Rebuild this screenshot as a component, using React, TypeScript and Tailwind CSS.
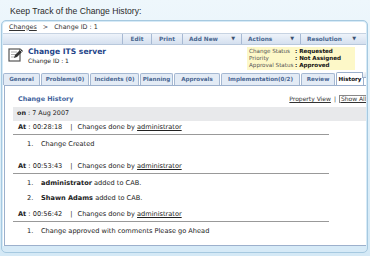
import React from "react";

const toolbar = [
  { label: "Edit", w: "w-[29px]" },
  { label: "Print", w: "w-[31px]" },
  { label: "Add New", w: "w-[59px]", menu: true },
  { label: "Actions", w: "w-[59px]", menu: true },
  { label: "Resolution", w: "w-[62px]", menu: true },
];

const tabs = [
  { label: "General", w: "w-[37px]" },
  { label: "Problems(0)", w: "w-[48px]" },
  { label: "Incidents (0)", w: "w-[49px]" },
  { label: "Planning", w: "w-[33px]" },
  { label: "Approvals", w: "w-[46px]" },
  { label: "Implementation(0/2)", w: "w-[79px]" },
  { label: "Review", w: "w-[34px]" },
  { label: "History", w: "w-[28px]", active: true },
];

const status = [
  { label: "Change Status", value: "Requested" },
  { label: "Priority", value: "Not Assigned" },
  { label: "Approval Status", value: "Approved" },
];

const entries = [
  { time: "00:28:18", pb: "pb-[8px]", items: [<>Change Created</>] },
  {
    time: "00:53:43",
    pb: "pb-[2px]",
    items: [
      <>
        <b>administrator</b> added to CAB.
      </>,
      <>
        <b>Shawn Adams</b> added to CAB.
      </>,
    ],
  },
  { time: "00:56:42", pb: "pb-[2px]", items: [<>Change approved with comments Please go Ahead</>] },
];

function EditIcon() {
  return (
    <svg width="15" height="15" viewBox="0 0 15 15">
      <rect x="1" y="2" width="11" height="12" fill="#fff" stroke="#555" strokeWidth="1.2" />
      <path d="M3 5h6M3 7.5h5M3 10h4" stroke="#999" strokeWidth="0.8" />
      <path d="M6 11l1-3 6-6 2 2-6 6z" fill="#333" />
      <path d="M12 3l2 2" stroke="#ddd" strokeWidth="0.8" />
    </svg>
  );
}

export default function App() {
  return (
    <div className="w-[370px] h-[256px] overflow-hidden bg-gradient-to-b from-[#eef7fc] to-[#d4e9f6] font-['DejaVu_Sans',sans-serif]">
      <div className="h-[20px] pl-[10px] pt-[6px] text-[8.6px] leading-[10px] text-[#2a2a2a] font-['Liberation_Sans',sans-serif]">
        Keep Track of the Change History:
      </div>

      <div className="ml-[1px] w-[367px] h-[233px] rounded-[5px] border border-[#a6c9e0] bg-[#d6eaf7] pl-[1px] pr-[1px] pt-[1px] pb-[6px]">
        <div className="h-full bg-white rounded-t-[3px] overflow-hidden flex flex-col">
          {/* breadcrumb */}
          <div className="h-[12px] border-b border-[#c7d3e2] flex items-center pl-[6px] text-[6.4px] text-[#333] gap-[6px]">
            <span className="underline">Changes</span>
            <span>&gt;</span>
            <span>Change ID : 1</span>
          </div>

          {/* toolbar */}
          <div className="h-[11px] bg-gradient-to-b from-[#eef3fa] to-[#d5e0ef] border-b border-[#b8c8dc] flex justify-start pl-[119px]">
            {toolbar.map((b) => (
              <div
                key={b.label}
                className={`${b.w} h-full border-l border-[#a7b9d3] flex items-center justify-between px-[6px] text-[5.8px] font-bold text-[#4a6790]`}
              >
                <span className={b.menu ? "" : "mx-auto"}>{b.label}</span>
                {b.menu && <span className="text-[5px] text-[#3b4f70]">▼</span>}
              </div>
            ))}
          </div>

          {/* title area */}
          <div className="h-[26px] flex items-start pl-[5px] pt-[2px]">
            <EditIcon />
            <div className="ml-[5px] flex flex-col">
              <span className="text-[7.6px] leading-[10px] font-bold text-[#25458a]">
                Change ITS server
              </span>
              <span className="text-[6px] leading-[7px] text-[#222]">Change ID : 1</span>
            </div>
            <div className="ml-auto mr-[11px] w-[108px] h-[23px] bg-[#fdf8c8] px-[2px] py-[1px] flex flex-col justify-center">
              {status.map((s) => (
                <div key={s.label} className="flex text-[5.6px] leading-[7px]">
                  <span className="w-[46px] text-[#555]">{s.label}</span>
                  <span className="font-bold text-[#111]">: {s.value}</span>
                </div>
              ))}
            </div>
          </div>

          {/* tabs */}
          <div className="h-[13px] mt-[1px] flex items-end">
            {tabs.map((t) => (
              <div
                key={t.label}
                className={`${t.w} relative h-[12px] mr-[1px] rounded-t-[2px] border border-b-0 flex items-center justify-center text-[5.6px] font-bold ${
                  t.active
                    ? "bg-white border-[#9cb0cc] text-[#111] h-[13px]"
                    : "bg-[#e3ebf5] border-[#a5b8d2] text-[#4a6692]"
                }`}
              >
                {t.label}
                {t.active && (
                  <span className="absolute -right-[5px] -top-[1px] w-[6px] h-[6px] bg-gradient-to-br from-[#ffffff] to-[#c9d4e3] border-l border-b border-[#9cb0cc]" />
                )}
              </div>
            ))}
          </div>

          {/* panel */}
          <div className="flex-1 ml-[1px] border-t border-l border-b border-[#9cb0cc] flex flex-col overflow-hidden">
            <div className="h-[20px] pt-[9px] flex items-start pl-[13px] whitespace-nowrap">
              <span className="text-[6.4px] leading-[8px] font-bold text-[#41619c]">Change History</span>
              <span className="ml-[216px] shrink-0 text-[6px] leading-[8px] text-[#333] flex gap-[3px]">
                <span className="underline">Property View</span>
                <span>|</span>
                <span className="border border-[#888] px-[1px] underline leading-[6px]">Show All</span>
              </span>
            </div>

            <div className="ml-[8px] h-[14px] mt-[1px] bg-[#e8e9eb] flex items-center pl-[4px] text-[6.4px] text-[#222]">
              <b>on</b>&nbsp;: 7 Aug 2007
            </div>

            {entries.map((e) => (
              <div key={e.time} className={e.pb}>
                <div className="ml-[8px] w-[316px] h-[14px] border-b border-[#999] flex items-center pl-[5px] text-[6.6px] text-[#222] whitespace-nowrap">
                  <b>At</b>&nbsp;: {e.time}
                  <span className="ml-[8px] mr-[5px]">|</span>
                  Changes done by&nbsp;<span className="underline">administrator</span>
                </div>
                <div className="pt-[2px]">
                  {e.items.map((it, i) => (
                    <div key={i} className="h-[15px] flex items-center pl-[22px] text-[6.6px] text-[#222]">
                      <span className="w-[14px]">{i + 1}.</span>
                      <span>{it}</span>
                    </div>
                  ))}
                </div>
              </div>
            ))}
          </div>
        </div>
      </div>
    </div>
  );
}
